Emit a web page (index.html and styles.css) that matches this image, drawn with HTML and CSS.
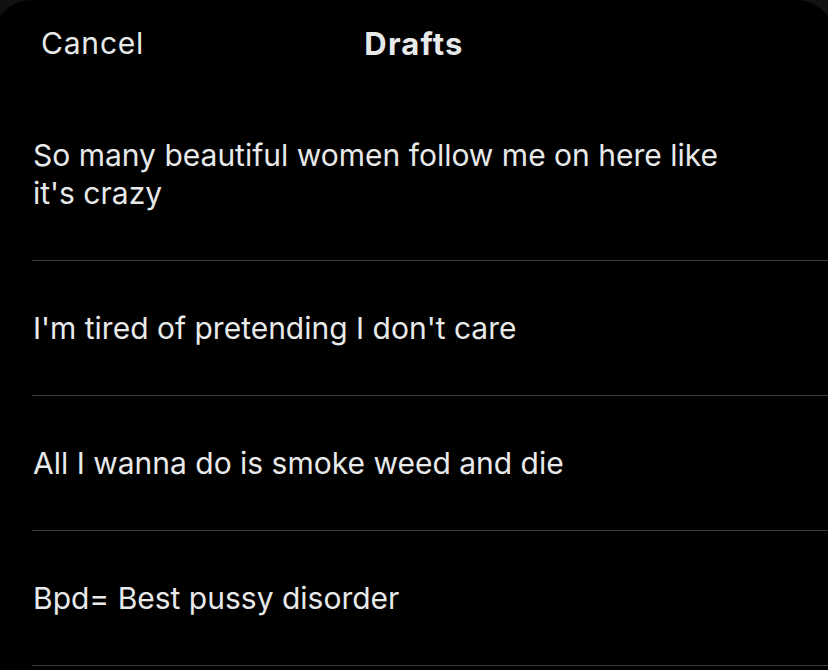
FILE: index.html
```html
<!DOCTYPE html>
<html lang="en">
<head>
  <meta charset="UTF-8">
  <meta name="viewport" content="width=device-width, initial-scale=1.0">
  <title>Drafts</title>
  <link rel="stylesheet" href="styles.css">
</head>
<body>
  <div class="sheet">
    <header class="top-bar">
      <a href="#" class="cancel">Cancel</a>
      <strong class="title">Drafts</strong>
    </header>
    <ul class="draft-list">
      <li class="draft">So many beautiful women follow me on here like it's crazy</li>
      <li class="draft">I'm tired of pretending I don't care</li>
      <li class="draft">All I wanna do is smoke weed and die</li>
      <li class="draft">Bpd= Best pussy disorder</li>
    </ul>
  </div>
</body>
</html>
```

FILE: styles.css
```css
* { box-sizing: border-box; }
html, body { height: 100%; }
body {
  margin: 0;
  background: #111113;
  font-family: Inter, "Liberation Sans", sans-serif;
  color: #e7e9ea;
  overflow: hidden;
}
.sheet {
  background: #000;
  min-height: 100%;
  border-radius: 40px 40px 0 0;
  margin: 0 -8px;
  padding: 0 8px;
}
.top-bar {
  position: relative;
  height: 88px;
  display: flex;
  align-items: center;
  justify-content: center;
  padding-bottom: 2px;
}
.cancel {
  position: absolute;
  left: 41px;
  top: 25px;
  color: #e7e9ea;
  text-decoration: none;
  font-size: 30px;
  letter-spacing: 0.8px;
}
.title {
  font-size: 31px;
  font-weight: 700;
  letter-spacing: 1.2px;
}
.draft-list {
  list-style: none;
  margin: 0;
  padding: 0 0 0 32px;
}
.draft {
  padding: 48px 90px 48px 1px;
  font-size: 30px;
  line-height: 38px;
  letter-spacing: 0;
  border-bottom: 1px solid #3a3b3d;
}
```
